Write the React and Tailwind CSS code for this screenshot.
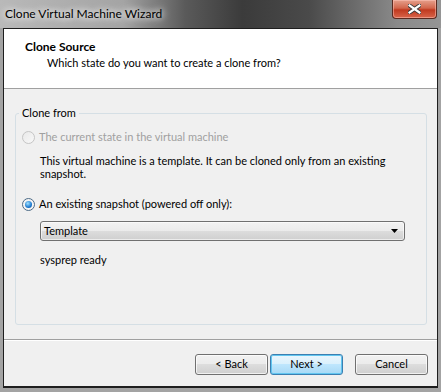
export default function App() {
  const font = "font-['Lato',sans-serif]";
  return (
    <div className={`w-[441px] h-[392px] flex flex-col bg-[#a3a3a3] ${font} text-[11px] text-black overflow-hidden`}>
      {/* title bar */}
      <div className="relative h-[28px] shrink-0 flex items-center pl-[3px] bg-[linear-gradient(90deg,#b9b9b9_0%,#a4a4a4_28%,#5a5a5a_42%,#3b3b3b_55%,#4a4a4a_70%,#8a8a8a_90%,#959595_100%)]">
        <span className="relative text-[12px] px-[2px] whitespace-nowrap [text-shadow:0_0_6px_#fff,0_0_10px_#fff]">Clone Virtual Machine Wizard</span>
        <div className="absolute right-[4px] top-0 w-[45px] h-[19px] rounded-b-[4px] border border-t-0 border-[#5a2a20] bg-[linear-gradient(180deg,#e6a08c_0%,#d2664c_45%,#c0391f_55%,#d9654a_100%)] flex items-center justify-center shadow-[inset_0_0_0_1px_rgba(255,200,190,0.5)]">
          <svg width="13" height="10" viewBox="0 0 13 10">
            <path d="M1.5 1.5 L11.5 8.5 M11.5 1.5 L1.5 8.5" stroke="#3a3a3a" strokeWidth="4" strokeLinecap="square" />
            <path d="M1.5 1.5 L11.5 8.5 M11.5 1.5 L1.5 8.5" stroke="#ffffff" strokeWidth="2.2" strokeLinecap="square" />
          </svg>
        </div>
      </div>

      {/* client area */}
      <div className="mx-[3px] flex-1 flex flex-col border border-b-2 border-[#1e1e1e] mb-[4px]">
        {/* header */}
        <div className="h-[60px] shrink-0 bg-white border-b border-[#a0a0a0] pt-[10px] pl-[21px]">
          <div className="font-bold h-[16px] leading-[16px] text-[12px]">Clone Source</div>
          <div className="ml-[22px] h-[16px] leading-[16px] whitespace-nowrap">Which state do you want to create a clone from?</div>
        </div>

        {/* body */}
        <div className="flex-1 bg-[#f0f0f0] flex flex-col">
          <div className="relative mt-[24px] ml-[11px] w-[412px] h-[212px] shrink-0 border border-[#d5dfe5] rounded-[3px] pl-[6px]">
            <span className="absolute -top-[9px] left-[3px] px-[3px] bg-[#f0f0f0] leading-[16px]">Clone from</span>

            <div className="mt-[16px] h-[15px] flex items-center text-[#a0a0a0]">
              <span className="w-[13px] h-[13px] rounded-full border border-[#c5c5c5] bg-[linear-gradient(135deg,#e9e9e9,#f8f8f8)]" />
              <span className="ml-[4px]">The current state in the virtual machine</span>
            </div>

            <div className="mt-[9px] pl-[18px] leading-[13px] whitespace-nowrap">
              This virtual machine is a template. It can be cloned only from an existing<br />snapshot.
            </div>

            <div className="mt-[17px] h-[15px] flex items-center">
              <span className="w-[13px] h-[13px] rounded-full border border-[#4c6a86] bg-[#f4f4f4] flex items-center justify-center">
                <span className="w-[7px] h-[7px] rounded-full bg-[radial-gradient(circle_at_40%_35%,#9fe1ff,#1e7ad0_60%,#0a4c8e)]" />
              </span>
              <span className="ml-[4px]">An existing snapshot (powered off only):</span>
            </div>

            <div className="mt-[9px] ml-[18px] w-[365px] h-[20px] border border-[#707070] rounded-[3px] bg-[linear-gradient(180deg,#f2f2f2_0%,#ebebeb_50%,#dddddd_50%,#cfcfcf_100%)] flex items-center pl-[3px] pr-[6px] shadow-[inset_0_0_0_1px_rgba(255,255,255,0.6)]">
              <span className="flex-1">Template</span>
              <svg width="7" height="4" viewBox="0 0 7 4"><path d="M0 0 H7 L3.5 4 Z" fill="#000" /></svg>
            </div>

            <div className="mt-[11px] ml-[18px] h-[15px] leading-[15px]">sysprep ready</div>
          </div>

          <div className="mt-[14px] border-t border-[#a0a0a0] border-b border-b-white" />

          <div className="mt-[13px] flex justify-end pr-[9px]">
            <button className="w-[73px] h-[21px] border border-[#707070] rounded-[3px] bg-[linear-gradient(180deg,#f2f2f2_0%,#ebebeb_50%,#dddddd_50%,#cfcfcf_100%)] shadow-[inset_0_0_0_1px_rgba(255,255,255,0.7)]">&lt; Back</button>
            <button className="ml-[2px] w-[73px] h-[21px] border border-[#3c7fb1] rounded-[3px] bg-[linear-gradient(180deg,#eaf6fd_0%,#d9f0fc_50%,#bee6fd_50%,#a7d9f5_100%)] shadow-[inset_0_0_0_1px_#61c6f0]">Next &gt;</button>
            <button className="ml-[12px] w-[73px] h-[21px] border border-[#707070] rounded-[3px] bg-[linear-gradient(180deg,#f2f2f2_0%,#ebebeb_50%,#dddddd_50%,#cfcfcf_100%)] shadow-[inset_0_0_0_1px_rgba(255,255,255,0.7)]">Cancel</button>
          </div>
        </div>
      </div>
    </div>
  );
}
